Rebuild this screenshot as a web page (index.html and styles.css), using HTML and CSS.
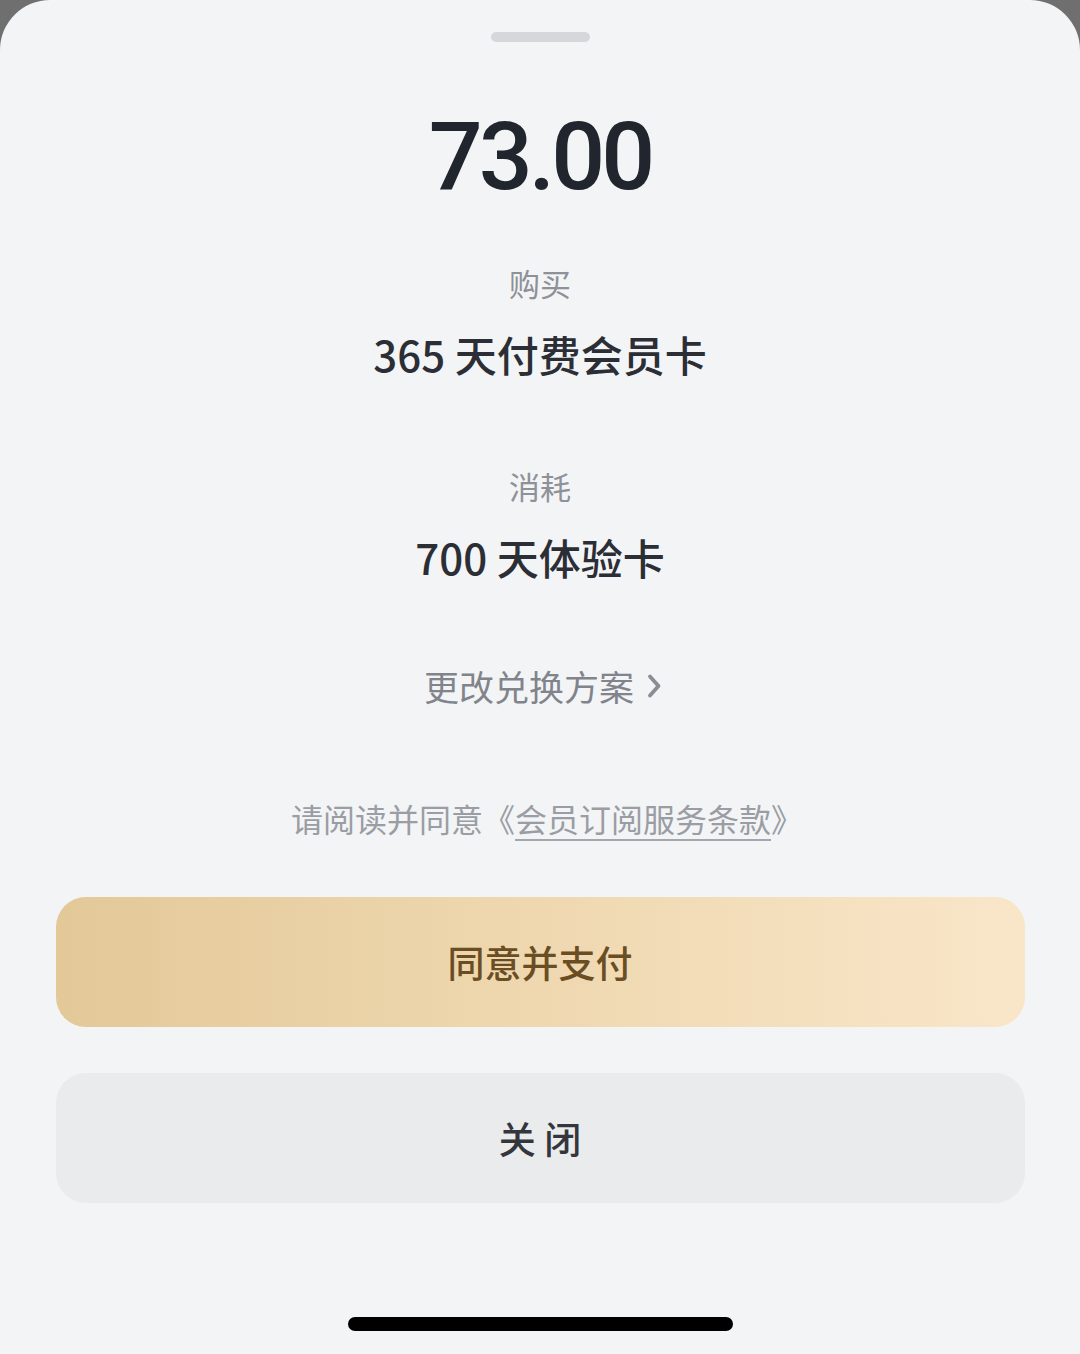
FILE: index.html
```html
<!DOCTYPE html>
<html lang="zh-CN">
<head>
    <meta charset="UTF-8">
    <meta name="viewport" content="width=device-width, initial-scale=1.0">
    <title>兑换会员卡</title>
    <link rel="stylesheet" href="styles.css">
</head>
<body>
    <div class="sheet">
        <div class="handle"></div>

        <div class="price">73.00</div>

        <div class="label label-buy">购买</div>
        <div class="item">365 天付费会员卡</div>

        <div class="label label-use">消耗</div>
        <div class="item">700 天体验卡</div>

        <a class="change-plan" href="#">
            更改兑换方案
            <svg class="chevron" width="16" height="26" viewBox="0 0 16 26">
                <path d="M4 3.5 L12.5 13 L4 22.5" fill="none" stroke="#8a8d93" stroke-width="3.8" stroke-linecap="round" stroke-linejoin="round"/>
            </svg>
        </a>

        <p class="terms">请阅读并同意《<span class="terms-link">会员订阅服务条款</span>》</p>

        <button class="btn btn-pay">同意并支付</button>
        <button class="btn btn-close">关 闭</button>

        <div class="home-bar"></div>
    </div>
</body>
</html>
```

FILE: styles.css
```css
* {
    box-sizing: border-box;
}

body {
    margin: 0;
    background: #6f6f70;
    font-family: "Noto Sans CJK SC", "Noto Sans", sans-serif;
}

.sheet {
    height: 1354px;
    background: #f3f4f6;
    border-radius: 50px 50px 0 0;
    display: flex;
    flex-direction: column;
    align-items: center;
    padding-top: 32px;
}

.handle {
    width: 99px;
    height: 10px;
    border-radius: 5px;
    background: #d5d7da;
}

.price {
    font-family: Roboto, "Noto Sans", sans-serif;
    font-weight: 500;
    font-size: 95px;
    line-height: 95px;
    letter-spacing: -4px;
    color: #21252d;
    margin-top: 67px;
}

.label {
    font-size: 31px;
    line-height: 32px;
    color: #8e9198;
}

.label-buy {
    margin-top: 63px;
}

.label-use {
    margin-top: 95px;
}

.item {
    font-size: 42px;
    line-height: 42px;
    font-weight: 500;
    color: #2b2e35;
    margin-top: 34px;
}

.change-plan {
    display: flex;
    align-items: center;
    gap: 12px;
    margin-top: 90px;
    margin-left: 6px;
    font-size: 35px;
    line-height: 35px;
    color: #81848b;
    text-decoration: none;
}

.terms {
    margin: 99px 0 0 14px;
    font-size: 32px;
    line-height: 32px;
    color: #9a9da3;
}

.terms-link {
    text-decoration: underline;
    text-decoration-color: #a3a6ac;
    text-decoration-thickness: 2px;
    text-underline-offset: 7px;
}

.btn {
    width: 969px;
    height: 130px;
    border: none;
    border-radius: 30px;
    font-family: "Noto Sans CJK SC", "Noto Sans", sans-serif;
    font-size: 37px;
    font-weight: 500;
    cursor: pointer;
}

.btn-pay {
    margin-top: 63px;
    background: linear-gradient(90deg, #e3c898 0%, #efd8b0 50%, #f9e6c9 100%);
    color: #6a4d23;
}

.btn-close {
    margin-top: 46px;
    background: #eaebed;
    color: #33363c;
}

.home-bar {
    width: 385px;
    height: 14px;
    border-radius: 7px;
    background: #000;
    margin-top: 114px;
}
```
